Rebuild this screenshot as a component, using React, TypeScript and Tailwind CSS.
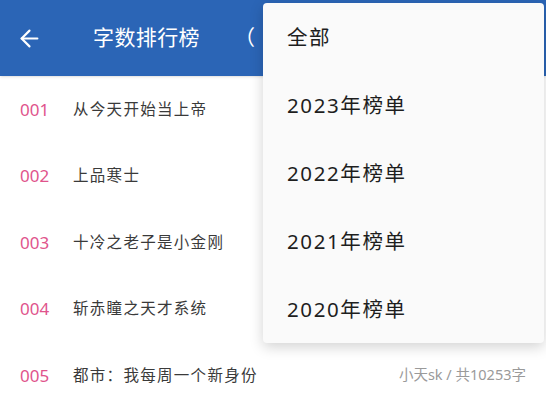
import { ArrowLeft } from 'lucide-react';

type Book = { rank: string; title: string; author?: string };

const books: Book[] = [
  { rank: '001', title: '从今天开始当上帝' },
  { rank: '002', title: '上品寒士' },
  { rank: '003', title: '十冷之老子是小金刚' },
  { rank: '004', title: '斩赤瞳之天才系统' },
  { rank: '005', title: '都市：我每周一个新身份', author: '小天sk / 共10253字' },
];

const years = ['全部', '2023年榜单', '2022年榜单', '2021年榜单', '2020年榜单'];

export default function App() {
  return (
    <div
      className="relative h-[401px] w-[546px] overflow-hidden bg-white"
      style={{ fontFamily: '"Noto Sans", "Noto Sans CJK SC", sans-serif' }}
    >
      {/* toolbar */}
      <header className="flex h-[76px] items-center bg-[#2b65b6] text-white shadow-sm">
        <ArrowLeft className="ml-[16px] h-[27px] w-[27px]" strokeWidth={1.9} />
        <h1 className="ml-[50px] flex w-[168px] overflow-hidden text-[21px] tracking-[0.4px] whitespace-nowrap">
          <span>字数排行榜</span>
          <span className="ml-[34px]">（</span>
        </h1>
      </header>

      {/* ranking list */}
      <ul>
        {books.map((b) => (
          <li key={b.rank} className="flex h-[66.5px] items-center pl-[20px] pr-[20px]">
            <span className="w-[53px] text-[17px] text-[#e0548c]">{b.rank}</span>
            <span className="flex-1 text-[15.5px] tracking-[1.3px] text-[#3a3a3a]">{b.title}</span>
            {b.author && <span className="text-[14.5px] text-[#9a9a9a]">{b.author}</span>}
          </li>
        ))}
      </ul>

      {/* year dropdown */}
      <div className="absolute left-[263px] top-[3px] w-[281px] rounded-[4px] bg-[#fafafa] shadow-[0_4px_14px_rgba(0,0,0,0.18)]">
        {years.map((y) => (
          <div
            key={y}
            className="flex h-[68px] items-center pl-[24px] text-[20.5px] tracking-[1.6px] text-[#1e1e1e]"
          >
            {y}
          </div>
        ))}
      </div>
    </div>
  );
}
